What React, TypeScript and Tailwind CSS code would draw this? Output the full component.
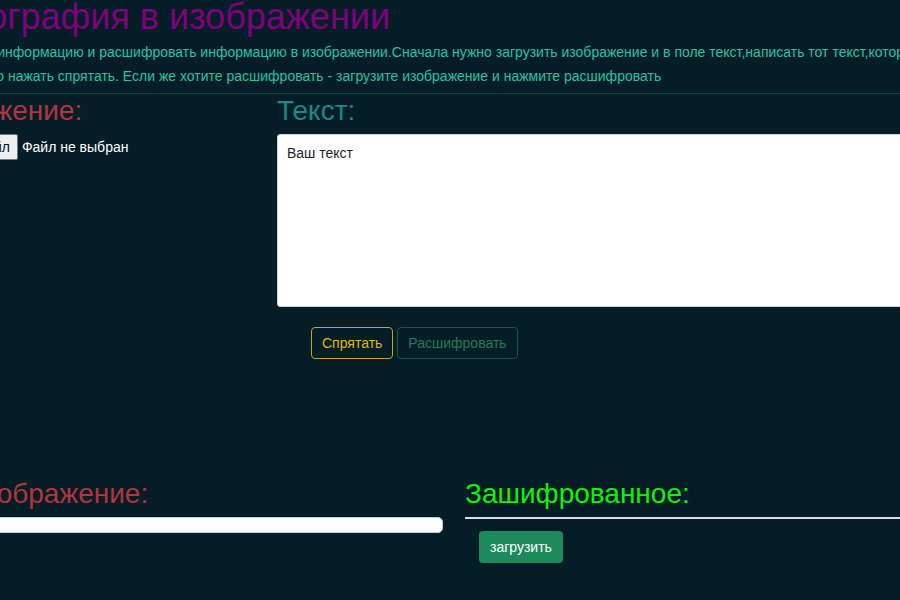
export default function App() {
  return (
    <div className="min-h-screen overflow-hidden bg-[#041d26] font-['Liberation_Sans',Arial,sans-serif] text-[14px] text-white">
      <div className="-ml-[120px] w-[1400px]">
        {/* Title */}
        <h2 className="-ml-[7px] -mt-[1px] text-[36px] leading-[36px] text-[#800080]">
          Стеганография в изображении
        </h2>

        {/* Description */}
        <p className="-ml-[7px] mt-[5px] -indent-[12px] text-[14px] leading-[24px] text-[#27c2a6] whitespace-nowrap">
          Вы можете спрятать информацию и расшифровать информацию в изображении.Сначала нужно загрузить изображение и в поле текст,написать тот текст,который хотите спрятать,
          <br />
          а после этого нужно нажать спрятать. Если же хотите расшифровать - загрузите изображение и нажмите расшифровать
        </p>

        <div className="mt-[5px] h-px bg-[#55194a]" />

        {/* Top row */}
        <div className="flex">
          <div className="w-[397px] pl-[18px]">
            <h3 className="pt-[1px] text-[28px] leading-[32px] text-[#b3353d]">Изображение:</h3>
            <div className="mt-[7px] flex items-center gap-[4px]">
              <span className="flex h-[26px] items-center rounded-[2px] border border-[#767676] bg-[#efefef] px-[7px] text-[14px] text-[#111]">
                Выберите файл
              </span>
              <span className="text-[14px] text-white">Файл не выбран</span>
            </div>
          </div>
          <div className="flex-1">
            <h3 className="pt-[1px] text-[28px] leading-[32px] text-[#19898a]">Текст:</h3>
            <div className="mt-[7px] h-[173px] rounded-[3px] border border-[#ced4da] bg-white px-[9px] pt-[8px] text-[14px] leading-[21px] text-[#212529]">
              Ваш текст
            </div>
            <div className="ml-[34px] mt-[20px] flex gap-[4px]">
              <button className="h-[32px] rounded-[4px] border border-[#c9a21d] px-[10px] text-[14px] text-[#e3b121]">
                Спрятать
              </button>
              <button className="h-[32px] rounded-[4px] border border-[#125a44] px-[10px] text-[14px] text-[#1d7d55]">
                Расшифровать
              </button>
            </div>
          </div>
        </div>

        {/* Bottom row */}
        <div className="mt-[119px] flex">
          <div className="w-[563px] pl-[84px]">
            <h3 className="text-[28px] leading-[32px] text-[#b3353d]">Изображение:</h3>
            <div className="mt-[7px] h-[16px] rounded-[5px] border border-[#bcd3dc] bg-white" />
          </div>
          <div className="ml-[22px] flex-1">
            <h3 className="text-[28px] leading-[32px] text-[#11f011]">Зашифрованное:</h3>
            <div className="mt-[7px] h-[2px] bg-[#dcdfe2]" />
            <button className="ml-[14px] mt-[12px] h-[32px] rounded-[4px] bg-[#1e8a5a] px-[11px] text-[14px] text-white">
              загрузить
            </button>
          </div>
        </div>
      </div>
    </div>
  );
}
